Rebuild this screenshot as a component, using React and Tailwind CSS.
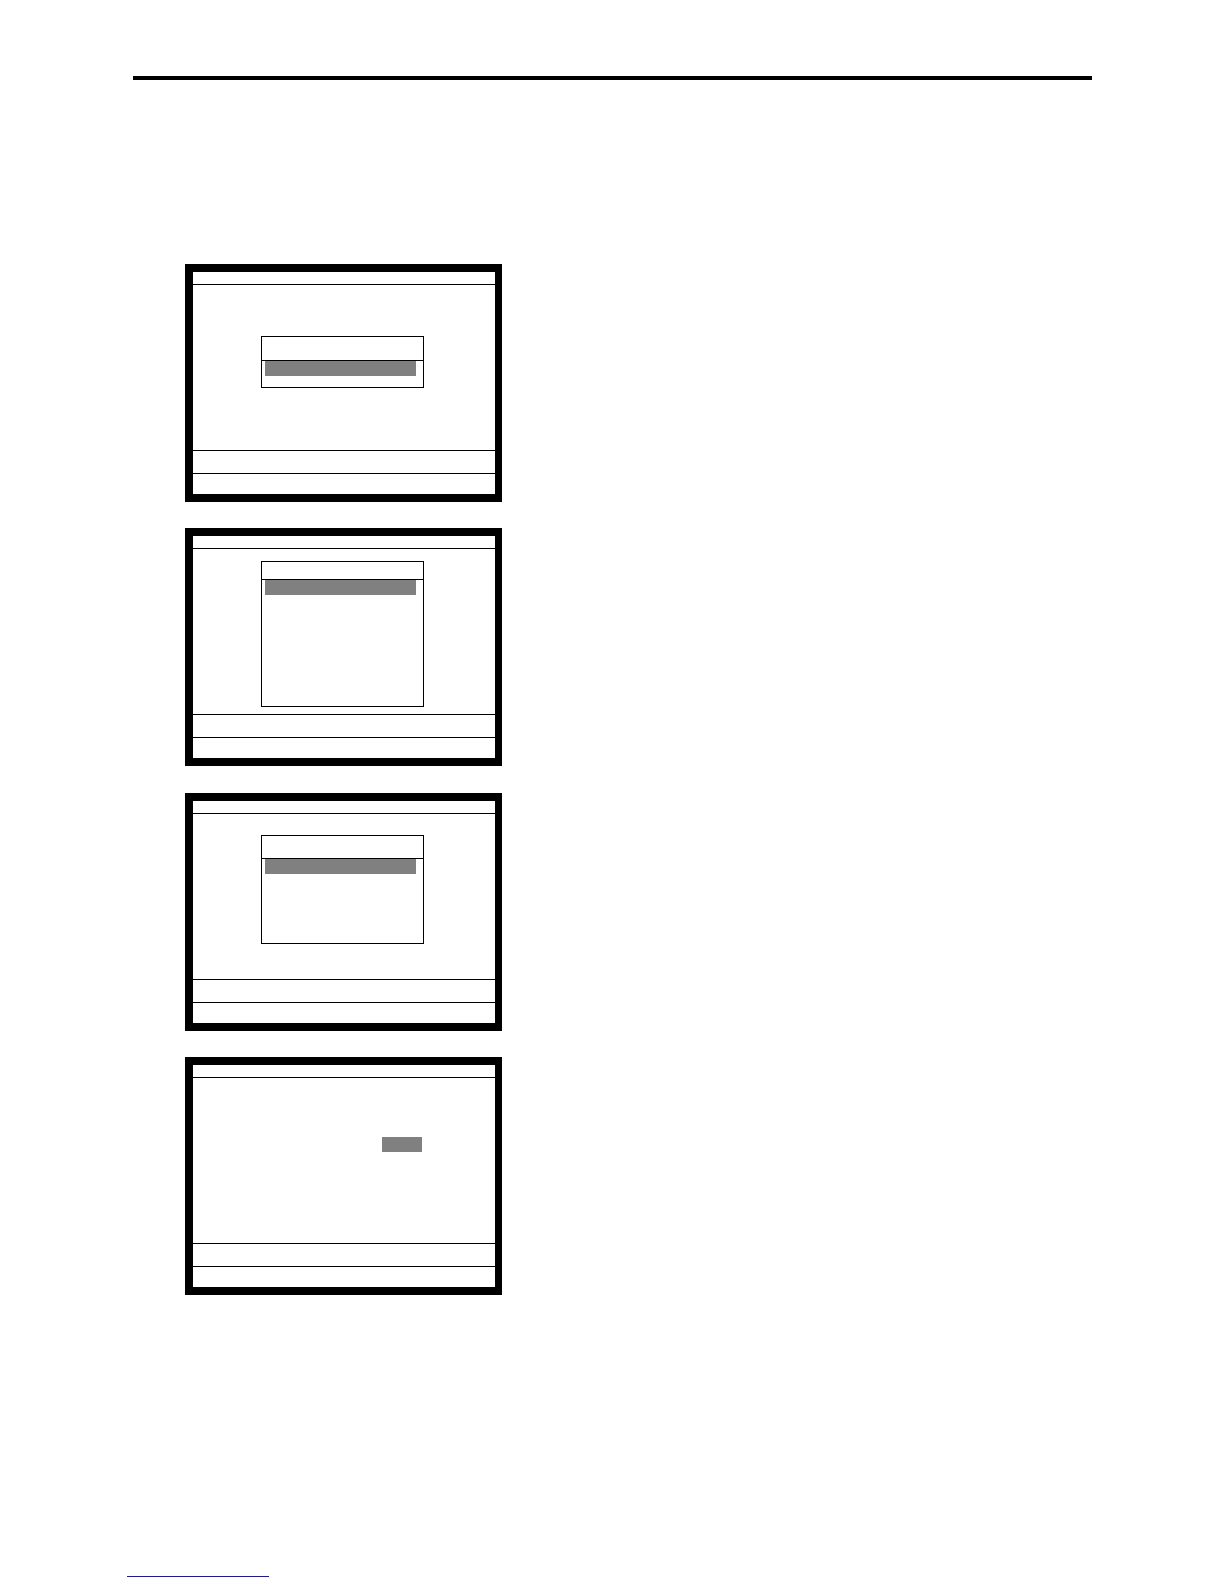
const panels = [
  { kind: 'dialog', top: 51, height: 52, title: 23 },
  { kind: 'dialog', top: 12, height: 146, title: 17 },
  { kind: 'dialog', top: 21, height: 109, title: 22 },
  { kind: 'field' },
]

function Dialog({ top, height, title }) {
  return (
    <div className="pl-[68px]" style={{ paddingTop: top }}>
      <div className="w-[163px] border border-black bg-white flex flex-col" style={{ height }}>
        <div className="border-b border-black" style={{ height: title + 1 }} />
        <div className="ml-[3px] w-[151px] h-[15px] bg-[#808080]" />
      </div>
    </div>
  )
}

function Screen({ panel }) {
  return (
    <div className="w-[317px] h-[238px] border-[8px] border-l-[8px] border-r-[7px] border-black bg-white flex flex-col">
      <div className="h-[13px] border-b border-black" />
      <div className="h-[165px]">
        {panel.kind === 'dialog' ? (
          <Dialog top={panel.top} height={panel.height} title={panel.title} />
        ) : (
          <div className="pl-[189px] pt-[59px]">
            <div className="w-[40px] h-[15px] bg-[#808080]" />
          </div>
        )}
      </div>
      <div className="h-[23px] border-t border-black" />
      <div className="flex-1 border-t border-black" />
    </div>
  )
}

export default function App() {
  return (
    <div className="w-[1224px] h-[1584px] bg-white overflow-hidden flex flex-col">
      <div className="mt-[76px] ml-[133px] w-[959px] h-[4px] bg-black" />
      <div className="mt-[184px] ml-[185px] flex flex-col gap-[26.33px]">
        {panels.map((p, i) => (
          <Screen key={i} panel={p} />
        ))}
      </div>
      <div className="mt-[281px] ml-[127px] w-[142px] h-px bg-[#1c1c8a]" />
    </div>
  )
}
